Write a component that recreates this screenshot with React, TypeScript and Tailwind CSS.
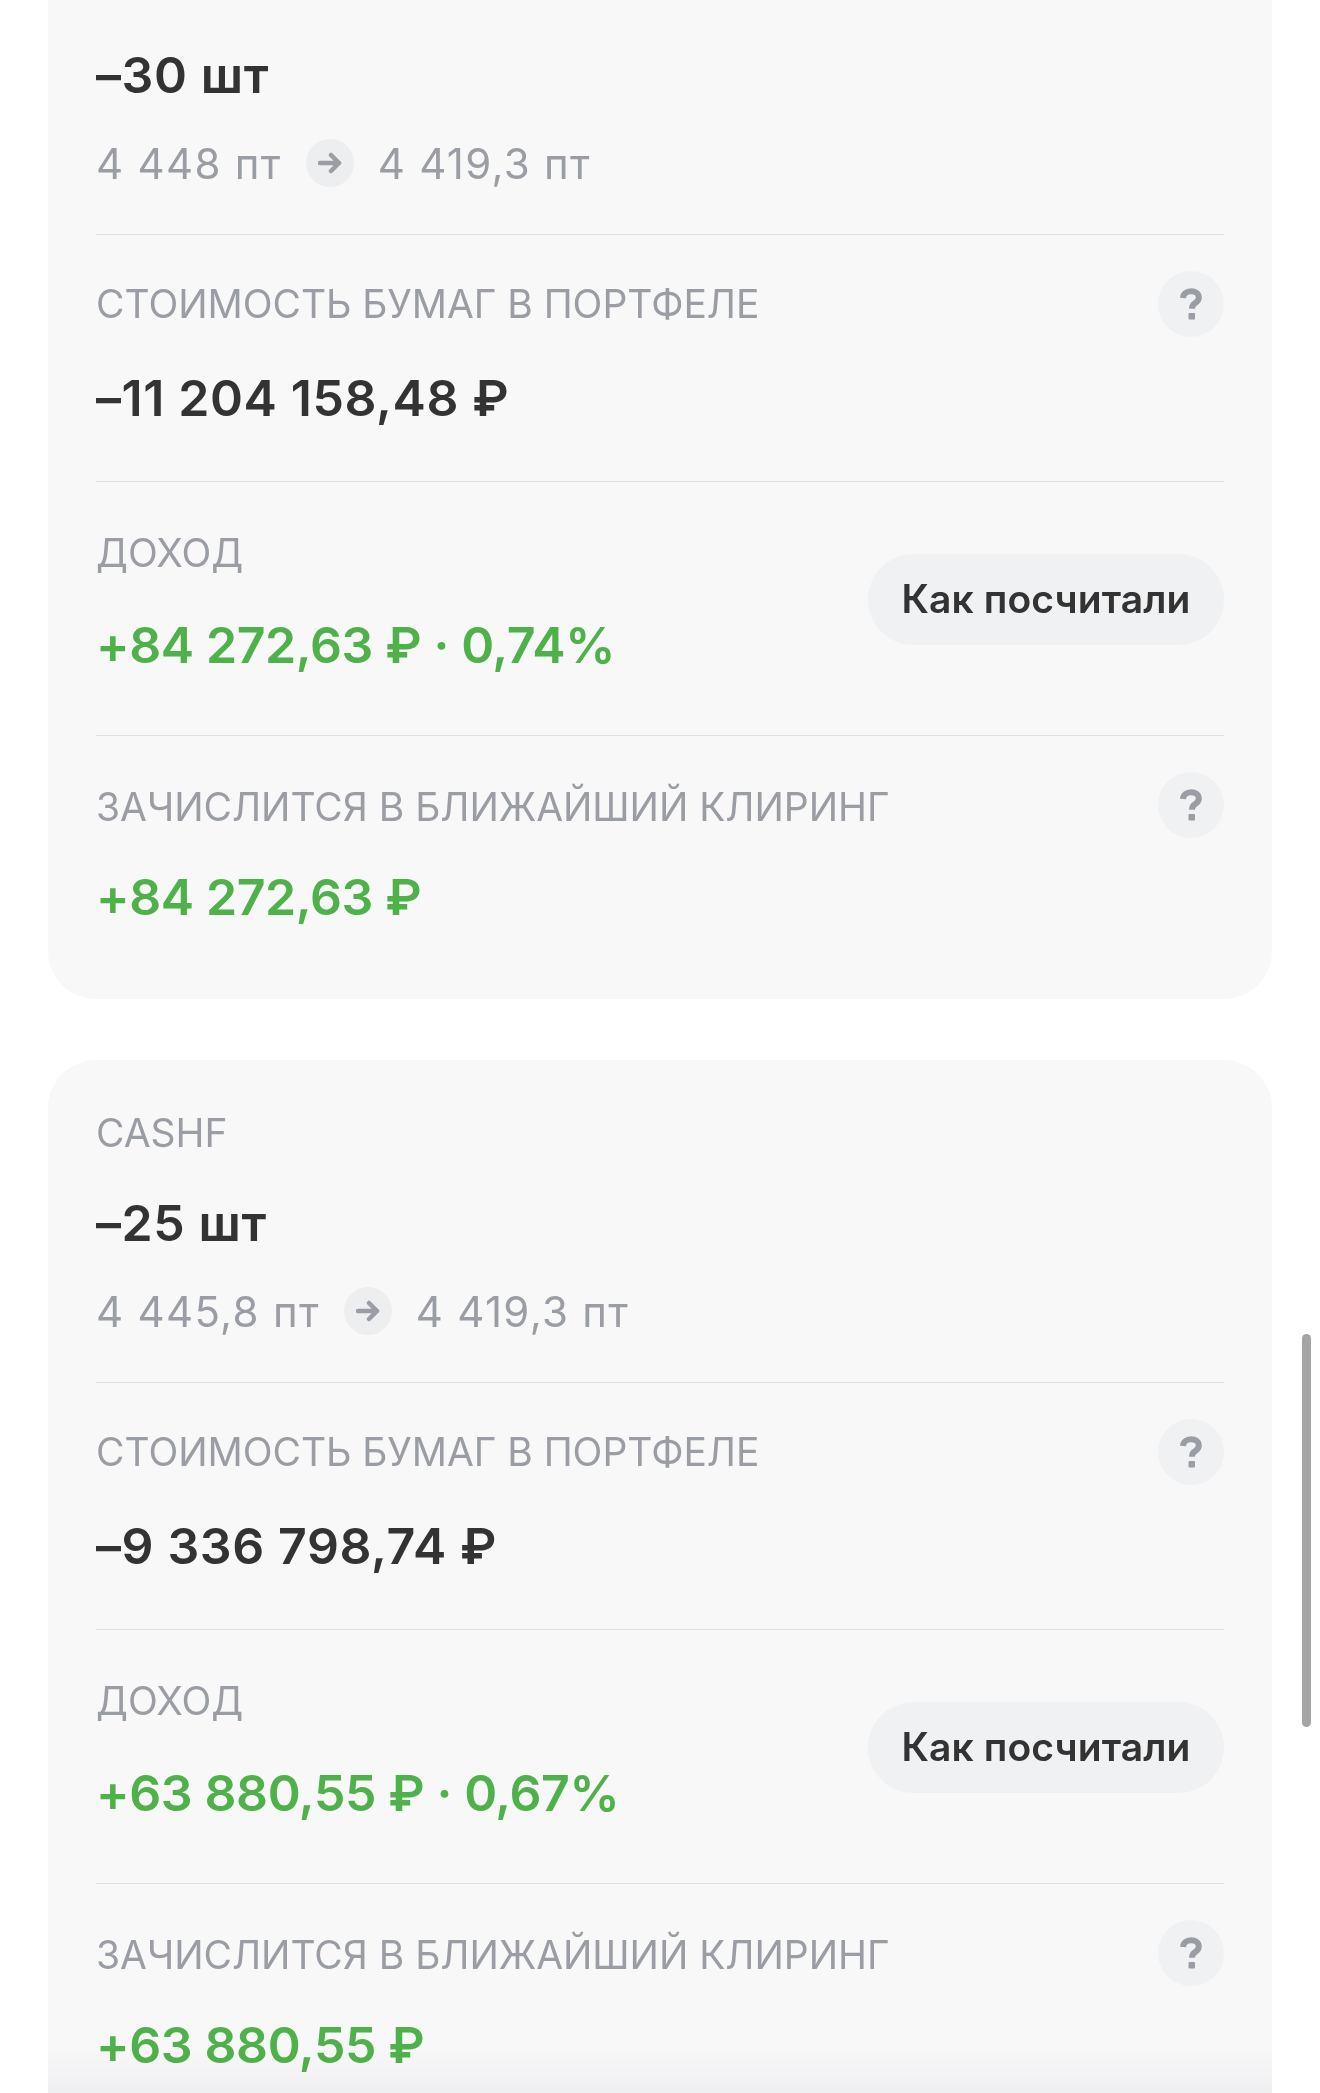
import React from 'react';

const FONT = "font-['Inter',_'Noto_Sans',_sans-serif]";

const Help = () => (
  <div className="flex h-[66px] w-[66px] shrink-0 items-center justify-center rounded-full bg-[#f0f1f3]">
    <svg width="22" height="32" viewBox="0 0 22 32" fill="none">
      <path d="M3 10C3.300 5.800 6.600 3.200 11 3.200c4.500 0 7.800 2.500 7.800 6.300 0 2.800-1.500 4.100-3.500 5.400-2 1.300-3.200 2.400-3.200 4.800v1" stroke="#9a9da3" strokeWidth="6" />
      <rect x="8.500" y="25" width="6.500" height="6.500" rx="1" fill="#9a9da3" />
    </svg>
  </div>
);

const Arrow = () => (
  <div className="flex h-[48px] w-[48px] items-center justify-center rounded-full bg-[#eceef0]">
    <svg width="24" height="22" viewBox="0 0 24 22" fill="none">
      <path d="M2 11h19M13 3l8 8-8 8" stroke="#9a9da3" strokeWidth="4.500" strokeLinecap="round" strokeLinejoin="round" />
    </svg>
  </div>
);

const Divider = () => <div className="h-px bg-[#dfe0e2]" />;

const Label = ({ children }: { children: React.ReactNode }) => (
  <div className="text-[39px] leading-[48px] tracking-[-0.05px] text-[#9a9da3]">{children}</div>
);

const Value = ({ green, children }: { green?: boolean; children: React.ReactNode }) => (
  <div
    className={`text-[50px] font-semibold leading-[60px] ${
      green ? 'tracking-[-0.4px] text-[#4fb14a]' : 'tracking-[0.6px] text-[#333333]'
    }`}
  >
    {children}
  </div>
);

interface PositionCardProps {
  ticker?: string;
  qty: string;
  priceFrom: string;
  priceTo: string;
  cost: string;
  income: string;
  percent: string;
}

const PositionCard = ({ ticker, qty, priceFrom, priceTo, cost, income, percent }: PositionCardProps) => (
  <div className={`bg-[#f8f8f9] px-12 ${ticker ? 'rounded-t-[48px] pt-[49px]' : 'rounded-b-[48px] pt-[45px]'}`}>
    {ticker && <div className="mb-9"><Label>{ticker}</Label></div>}
    <Value>{qty}</Value>
    <div className="mt-7 mb-[41px] flex h-[60px] items-center gap-6 text-[42px] tracking-[1.300px] text-[#9a9da3]">
      <span>{priceFrom}</span>
      <Arrow />
      <span>{priceTo}</span>
    </div>
    <Divider />

    <div className="pt-9 pb-[53px]">
      <div className="flex items-center justify-between">
        <Label>СТОИМОСТЬ БУМАГ В ПОРТФЕЛЕ</Label>
        <Help />
      </div>
      <div className="mt-[31px]"><Value>{cost}</Value></div>
    </div>
    <Divider />

    <div className="flex items-center justify-between pt-[47px] pb-[60px]">
      <div>
        <Label>ДОХОД</Label>
        <div className="mt-[38px]"><Value green>{income} · {percent}</Value></div>
      </div>
      <button className="mb-[6px] flex h-[91px] w-[356px] items-center justify-center rounded-full bg-[#f0f1f3] text-[39px] font-semibold tracking-[0.1px] text-[#333333]">
        Как посчитали
      </button>
    </div>
    <Divider />

    <div className="pt-9 pb-[72px]">
      <div className="flex items-center justify-between">
        <div className="pt-[3px]"><Label>ЗАЧИСЛИТСЯ В БЛИЖАЙШИЙ КЛИРИНГ</Label></div>
        <Help />
      </div>
      <div className="mt-[29px]"><Value green>{income}</Value></div>
    </div>
  </div>
);

export default function App() {
  return (
    <div className={`relative h-[2093px] overflow-hidden bg-white px-12 ${FONT}`}>
      <div className="flex flex-col gap-[61px]">
        <PositionCard qty="–30 шт" priceFrom="4 448 пт" priceTo="4 419,3 пт" cost="–11 204 158,48 ₽" income="+84 272,63 ₽" percent="0,74%" />
        <PositionCard ticker="CASHF" qty="–25 шт" priceFrom="4 445,8 пт" priceTo="4 419,3 пт" cost="–9 336 798,74 ₽" income="+63 880,55 ₽" percent="0,67%" />
      </div>
      <div className="absolute top-[1334px] right-[9px] h-[393px] w-[9px] rounded-full bg-[#a5a5a5]" />
      <div className="absolute right-12 bottom-0 left-12 h-[45px] bg-gradient-to-b from-white to-[#f6f6f7] mix-blend-multiply" />
    </div>
  );
}
